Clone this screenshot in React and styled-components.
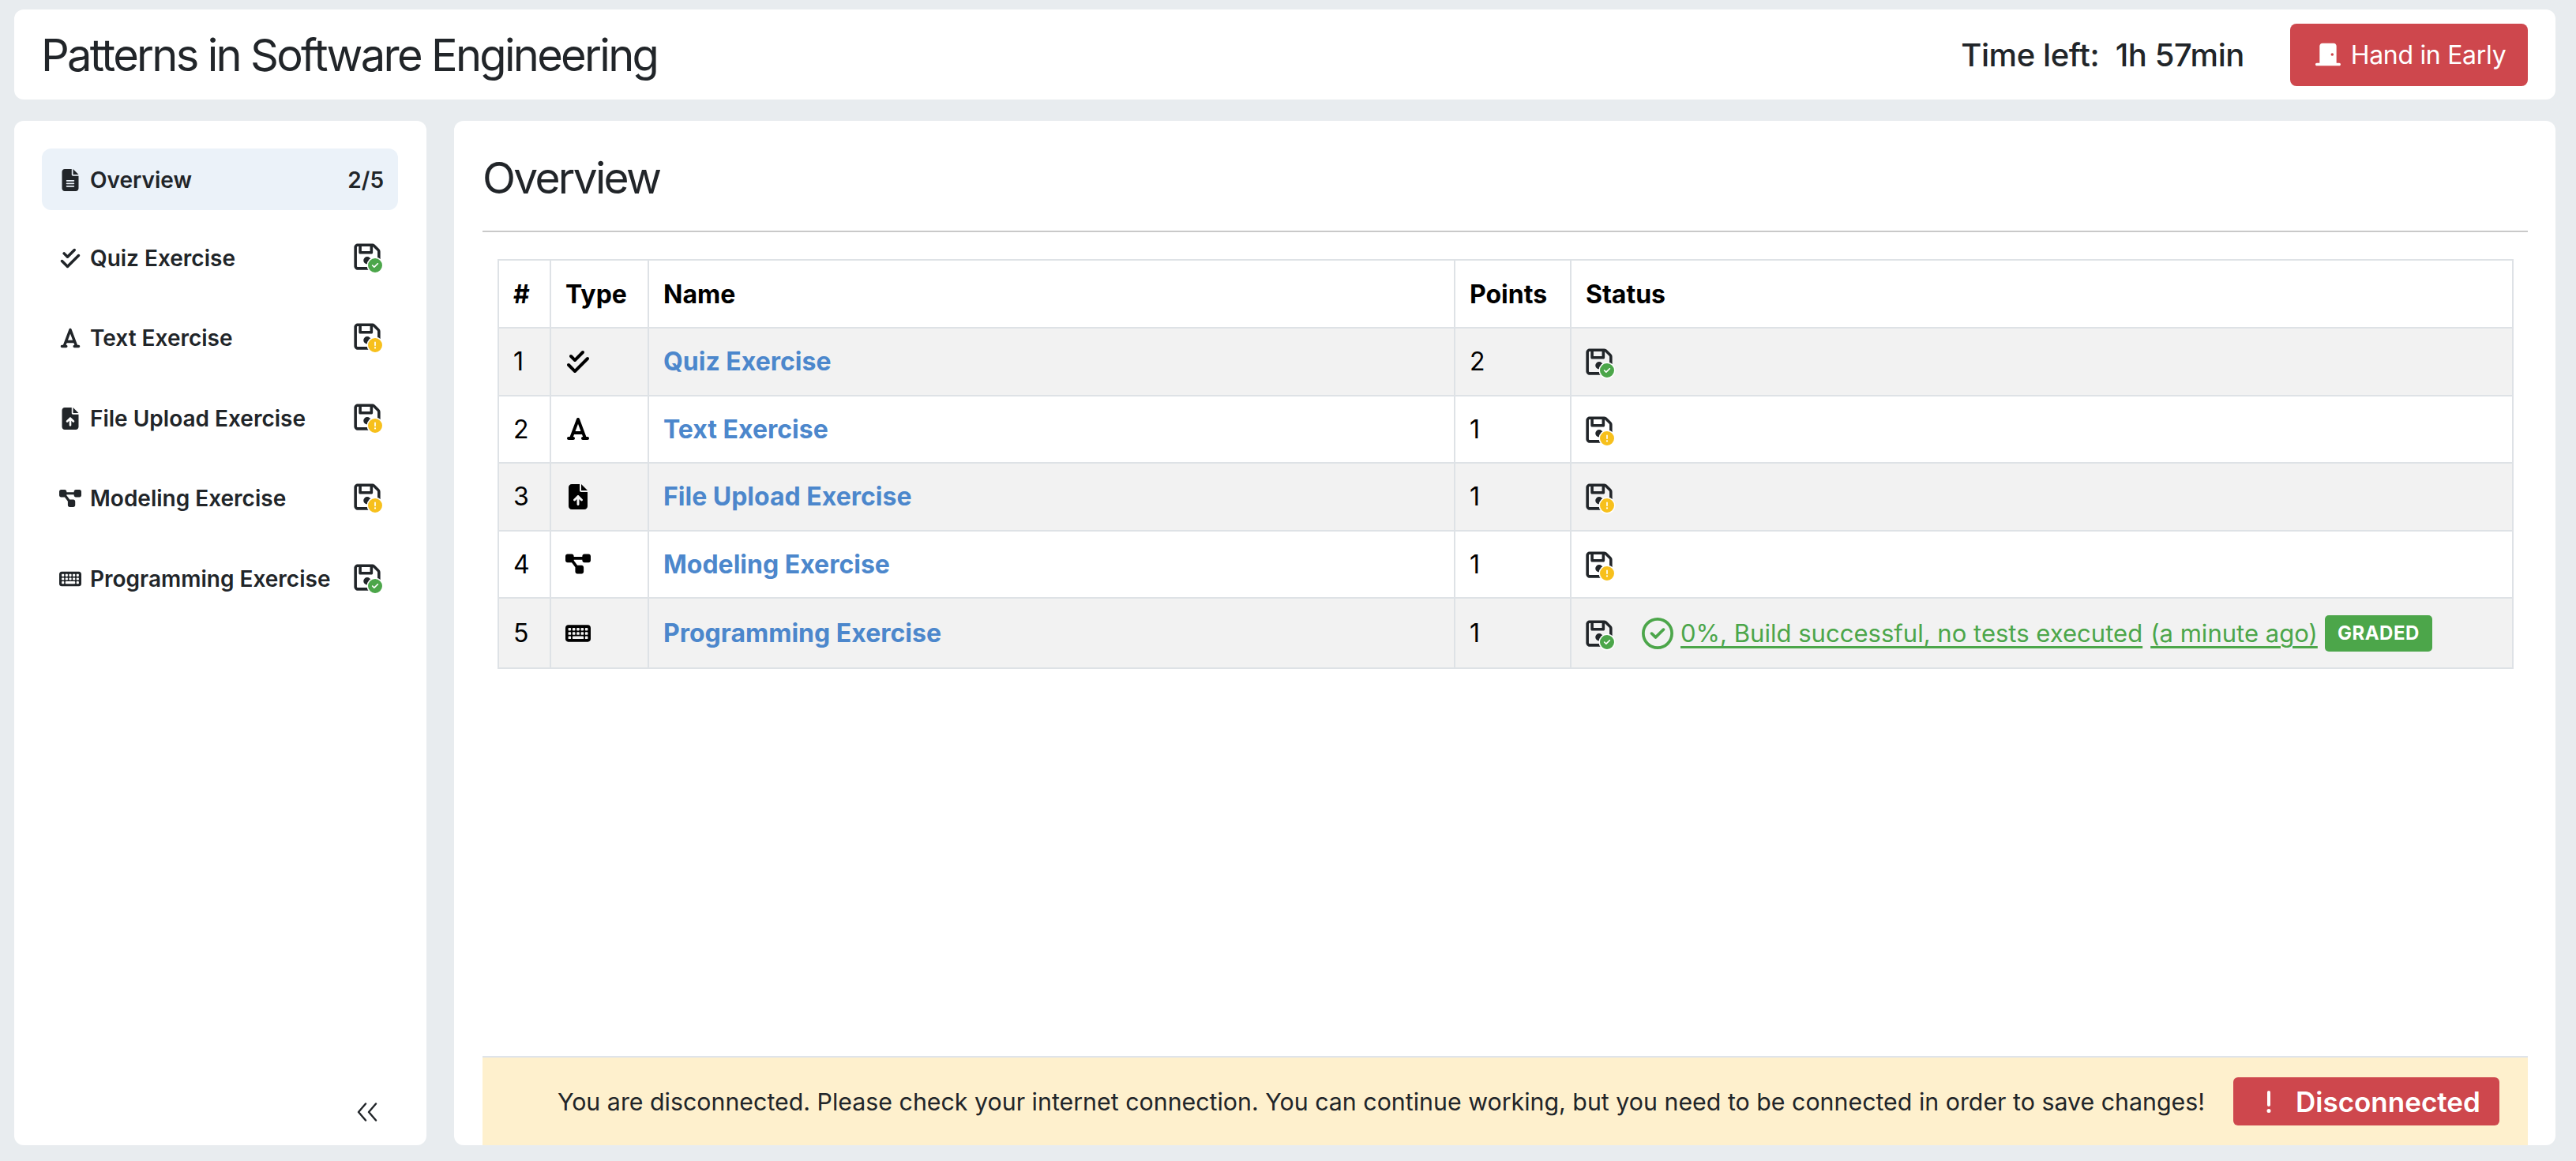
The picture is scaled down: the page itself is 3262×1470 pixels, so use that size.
import React from 'react'
import styled, { createGlobalStyle } from 'styled-components'
import {
  FaFileLines,
  FaCheckDouble,
  FaFont,
  FaFileArrowUp,
  FaDiagramProject,
  FaKeyboard,
  FaRegFloppyDisk,
  FaDoorClosed,
  FaRegCircleCheck,
  FaExclamation,
  FaCircleCheck,
  FaCircleExclamation,
} from 'react-icons/fa6'

const GREEN = '#4ca64a'
const YELLOW = '#f7c01c'
const RED = '#ce474d'

const exercises = [
  { id: 1, name: 'Quiz Exercise', Icon: FaCheckDouble, points: 2, saved: true },
  { id: 2, name: 'Text Exercise', Icon: FaFont, points: 1, saved: false },
  { id: 3, name: 'File Upload Exercise', Icon: FaFileArrowUp, points: 1, saved: false },
  { id: 4, name: 'Modeling Exercise', Icon: FaDiagramProject, points: 1, saved: false },
  { id: 5, name: 'Programming Exercise', Icon: FaKeyboard, points: 1, saved: true, result: true },
]

const GlobalStyle = createGlobalStyle`
  html, body {
    margin: 0;
    padding: 0;
    background: #e8ecef;
  }
  body {
    font-family: Inter, "Liberation Sans", sans-serif;
    color: #212529;
  }
`

const Page = styled.div`
  box-sizing: border-box;
  height: 1470px;
  padding: 12px 26px 20px 18px;
  display: flex;
  flex-direction: column;
  gap: 27px;
`

const Header = styled.header`
  flex: 0 0 114px;
  display: flex;
  align-items: center;
  background: #fff;
  border-radius: 12px;
  padding: 0 35px 0 34px;
`

const Title = styled.h1`
  margin: 2px 0 0;
  font-size: 56px;
  font-weight: 400;
  letter-spacing: -2.7px;
  flex: 1;
`

const TimeLeft = styled.span`
  font-size: 40px;
  font-weight: 500;
  letter-spacing: -0.4px;
  margin-right: 58px;
  white-space: pre;
`

const HandIn = styled.button`
  width: 301px;
  height: 79px;
  border: 0;
  border-radius: 8px;
  padding: 0 0 0 4px;
  background: ${RED};
  color: #fff;
  font: 400 32px Inter, sans-serif;
  letter-spacing: -0.3px;
  display: flex;
  align-items: center;
  justify-content: center;
  gap: 13px;
  svg { font-size: 32px; }
`

const Body = styled.div`
  flex: 1;
  min-height: 0;
  display: flex;
  gap: 35px;
`

const Sidebar = styled.nav`
  box-sizing: border-box;
  width: 522px;
  background: #fff;
  border-radius: 12px;
  padding: 35px 36px 30px 35px;
  display: flex;
  flex-direction: column;
`

const NavItem = styled.div`
  box-sizing: border-box;
  height: ${p => (p.$active ? '78px' : '101.5px')};
  margin-bottom: ${p => (p.$active ? '10px' : '0')};
  display: flex;
  align-items: center;
  padding: ${p => (p.$active ? '2px 18px 0 20px' : '0 20px 0 20px')};
  border-radius: 12px;
  background: ${p => (p.$active ? '#ebf2f9' : 'transparent')};
  font-size: 28px;
  font-weight: 600;
`

const NavIcon = styled.span`
  flex: 0 0 32px;
  margin-right: 9px;
  display: flex;
  justify-content: center;
  font-size: 28px;
`

const NavLabel = styled.span`
  flex: 1;
  white-space: nowrap;
`

const Collapse = styled.div`
  margin-top: auto;
  align-self: flex-end;
  margin-right: 25px;
  line-height: 0;
`

const Disk = styled.span`
  position: relative;
  flex: 0 0 36px;
  display: inline-block;
  width: 36px;
  height: 36px;
  margin-top: ${p => (p.$inTable ? '5px' : '0')};
  line-height: 0;
  color: #212529;
  svg.disk {
    display: block;
    font-size: 38px;
    margin: -3px 0 0 -2.5px;
  }
`

const DiskBadge = styled.span`
  position: absolute;
  right: 0;
  bottom: 0;
  width: 18px;
  height: 18px;
  border-radius: 50%;
  background: #fff;
  box-shadow: 0 0 0 1.5px #fff;
  color: ${p => p.$color};
  font-size: 18px;
  line-height: 0;
`

const Main = styled.main`
  flex: 1;
  min-width: 0;
  box-sizing: border-box;
  background: #fff;
  border-radius: 12px;
  padding: 0 35px 0 36px;
  display: flex;
  flex-direction: column;
`

const Heading = styled.h2`
  margin: 0;
  height: 141px;
  box-sizing: border-box;
  border-bottom: 2px solid #c9c9c9;
  padding-top: 38px;
  font-size: 55px;
  font-weight: 400;
  letter-spacing: -2.7px;
  line-height: 68px;
`

const Table = styled.table`
  width: 2553px;
  margin: 34px 0 0 19px;
  border-collapse: collapse;
  table-layout: fixed;
  font-size: 32px;
  color: #000;
`

const Th = styled.th`
  box-sizing: border-box;
  border: 2px solid #dee2e6;
  height: 86px;
  padding: 0 18px;
  text-align: left;
  font-weight: 700;
  width: ${p => p.$w || 'auto'};
`

const Row = styled.tr`
  background: ${p => (p.$striped ? '#f2f2f2' : '#fff')};
`

const Td = styled.td`
  box-sizing: border-box;
  border: 2px solid #dee2e6;
  height: ${p => (p.$tall ? '89px' : '85.5px')};
  padding: 0 18px;
  white-space: nowrap;
`

const TypeIcon = styled.span`
  display: flex;
  font-size: 32px;
`

const NameLink = styled.a`
  color: #4c87cc;
  font-weight: 700;
`

const StatusCell = styled.div`
  display: flex;
  align-items: center;
`

const Result = styled.span`
  display: inline-flex;
  align-items: center;
  margin-left: 35px;
  color: ${GREEN};
  font-size: 31.05px;
`

const ResultIcon = styled.span`
  display: inline-flex;
  font-size: 40px;
  margin-right: 9px;
`

const ResultLink = styled.a`
  text-decoration: underline;
  text-underline-offset: 5px;
  margin-right: ${p => p.$mr || 0};
`

const Badge = styled.span`
  box-sizing: border-box;
  height: 46px;
  width: 136px;
  margin-left: 9px;
  border-radius: 5px;
  background: ${GREEN};
  color: #fff;
  font-size: 24px;
  font-weight: 700;
  letter-spacing: 0.5px;
  display: inline-flex;
  align-items: center;
  justify-content: center;
`

const Footer = styled.div`
  margin-top: auto;
  box-sizing: border-box;
  height: 113px;
  border-top: 2px solid #dfe4ea;
  background: #fef0cd;
  display: flex;
  align-items: center;
  justify-content: flex-end;
  padding: 0 36px 0 0;
  font-size: 30.35px;
`

const Warning = styled.span`
  margin-right: 36px;
  white-space: nowrap;
`

const Disconnected = styled.div`
  flex: 0 0 337px;
  height: 61px;
  border-radius: 6px;
  background: ${RED};
  color: #fff;
  font-size: 35px;
  font-weight: 600;
  display: flex;
  align-items: center;
  padding-left: 29px;
  box-sizing: border-box;
  gap: 18px;
  svg { font-size: 32px; }
`

const SaveStatus = ({ saved, inTable }) => (
  <Disk $inTable={inTable}>
    <FaRegFloppyDisk className="disk" />
    <DiskBadge $color={saved ? GREEN : YELLOW}>
      {saved ? <FaCircleCheck /> : <FaCircleExclamation />}
    </DiskBadge>
  </Disk>
)

const App = () => (
  <Page>
    <GlobalStyle />
    <Header>
      <Title>Patterns in Software Engineering</Title>
      <TimeLeft>Time left:  1h 57min</TimeLeft>
      <HandIn><FaDoorClosed />Hand in Early</HandIn>
    </Header>
    <Body>
      <Sidebar>
        <NavItem $active>
          <NavIcon><FaFileLines /></NavIcon>
          <NavLabel>Overview</NavLabel>
          <span>2/5</span>
        </NavItem>
        {exercises.map(({ id, name, Icon, saved }) => (
          <NavItem key={id}>
            <NavIcon><Icon /></NavIcon>
            <NavLabel>{name}</NavLabel>
            <SaveStatus saved={saved} />
          </NavItem>
        ))}
        <Collapse>
          <svg width="28" height="24" viewBox="0 0 28 24" fill="none" stroke="#212529" strokeWidth="2.4" strokeLinecap="round" strokeLinejoin="round">
            <path d="M12 1.5 3 12l9 10.5" />
            <path d="M25 1.5 16 12l9 10.5" />
          </svg>
        </Collapse>
      </Sidebar>
      <Main>
        <Heading>Overview</Heading>
        <Table>
          <thead>
            <tr>
              <Th $w="66px">#</Th>
              <Th $w="124px">Type</Th>
              <Th $w="1021px">Name</Th>
              <Th $w="147px">Points</Th>
              <Th>Status</Th>
            </tr>
          </thead>
          <tbody>
            {exercises.map(({ id, name, Icon, points, saved, result }) => (
              <Row key={id} $striped={id % 2 === 1}>
                <Td $tall={result}>{id}</Td>
                <Td><TypeIcon><Icon /></TypeIcon></Td>
                <Td><NameLink>{name}</NameLink></Td>
                <Td>{points}</Td>
                <Td>
                  <StatusCell>
                    <SaveStatus saved={saved} inTable />
                    {result && (
                      <Result>
                        <ResultIcon><FaRegCircleCheck /></ResultIcon>
                        <ResultLink $mr="10px">0%, Build successful, no tests executed</ResultLink>
                        <ResultLink>(a minute ago)</ResultLink>
                        <Badge>GRADED</Badge>
                      </Result>
                    )}
                  </StatusCell>
                </Td>
              </Row>
            ))}
          </tbody>
        </Table>
        <Footer>
          <Warning>You are disconnected. Please check your internet connection. You can continue working, but you need to be connected in order to save changes!</Warning>
          <Disconnected><FaExclamation />Disconnected</Disconnected>
        </Footer>
      </Main>
    </Body>
  </Page>
)

export default App
